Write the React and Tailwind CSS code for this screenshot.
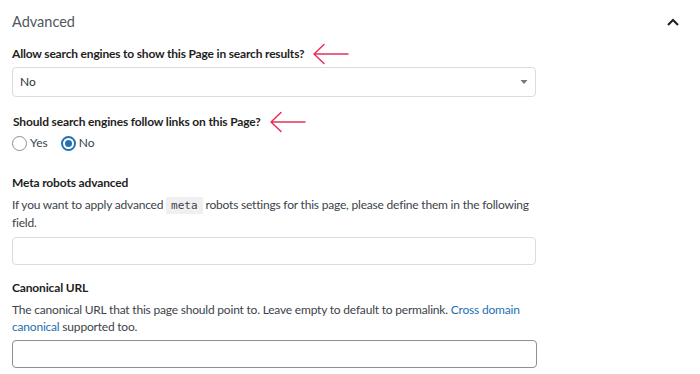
import React from "react";

function Arrow() {
  return (
    <svg width="38" height="22" viewBox="0 0 38 22" className="ml-[8px] shrink-0">
      <path d="M2 11 H36 M12 1.5 L2 11 L12 20.5" fill="none" stroke="#e8305a" strokeWidth="1.5" strokeLinecap="round" strokeLinejoin="round" />
    </svg>
  );
}

export default function App() {
  return (
    <div className="w-[700px] h-[374px] bg-white overflow-hidden text-[#1e1e1e]" style={{ fontFamily: 'Lato, "Open Sans", sans-serif' }}>
      <div className="flex items-center justify-between pl-[12px] pr-[20px] pt-[10px] h-[33px]">
        <div className="text-[14.5px] text-[#50575e] leading-[22px]">Advanced</div>
        <svg width="14" height="10" viewBox="0 0 14 10">
          <path d="M2 8 L7 3 L12 8" fill="none" stroke="#1e1e1e" strokeWidth="2" />
        </svg>
      </div>
      <div className="pl-[12px]">
        <div className="flex items-center h-[20px] mt-[11px] text-[12px] font-bold tracking-[-0.18px] text-[#1e1e1e]">
          Allow search engines to show this Page in search results?
          <Arrow />
        </div>
        <div className="mt-[3px] w-[524px] h-[30px] border border-[#dcdcde] rounded-[4px] flex items-center justify-between pl-[7px] pr-[6px] text-[12px] text-[#2c3338]">
          <span>No</span>
          <svg width="10" height="6" viewBox="0 0 10 6"><path d="M1.5 1 L8.5 1 L5 5 Z" fill="#777" /></svg>
        </div>
        <div className="flex items-center h-[20px] mt-[15px] text-[12px] font-bold tracking-[-0.15px] pl-[1px]">
          Should search engines follow links on this Page?
          <Arrow />
        </div>
        <div className="flex items-center h-[20px] mt-[1px] text-[12px] text-[#3c434a]">
          <span className="w-[15px] h-[15px] rounded-full border border-[#8c8f94] mr-[3px]"></span>
          <span>Yes</span>
          <span className="ml-[13px] w-[15px] h-[15px] rounded-full border-[2px] border-[#2271b1] mr-[3px] flex items-center justify-center">
            <span className="w-[7px] h-[7px] rounded-full bg-[#2271b1]"></span>
          </span>
          <span>No</span>
        </div>
        <div className="mt-[20px] h-[20px] flex items-center text-[12px] font-bold tracking-[-0.15px]">Meta robots advanced</div>
        <div className="mt-[3px] w-[530px] text-[12px] leading-[17px] text-[#3c434a] tracking-[-0.2px]">
          If you want to apply advanced{" "}
          <code className="bg-[#f0f0f1] px-[5px] text-[11px] leading-[17px] text-[#3c434a] tracking-normal inline-block" style={{ fontFamily: '"DejaVu Sans Mono", monospace' }}>meta</code>{" "}
          robots settings for this page, please define them in the following field.
        </div>
        <div className="mt-[6px] w-[524px] h-[28px] border border-[#dcdcde] rounded-[4px]"></div>
        <div className="mt-[13px] h-[20px] flex items-center text-[12px] font-bold tracking-[-0.15px]">Canonical URL</div>
        <div className="mt-[3px] w-[530px] text-[12px] leading-[17px] text-[#3c434a] tracking-[-0.2px]">
          The canonical URL that this page should point to. Leave empty to default to permalink.{" "}
          <span className="text-[#2271b1]">Cross domain canonical</span> supported too.
        </div>
        <div className="mt-[5px] w-[525px] h-[28px] border border-[#8c8f94] rounded-[4px]"></div>
      </div>
    </div>
  );
}
